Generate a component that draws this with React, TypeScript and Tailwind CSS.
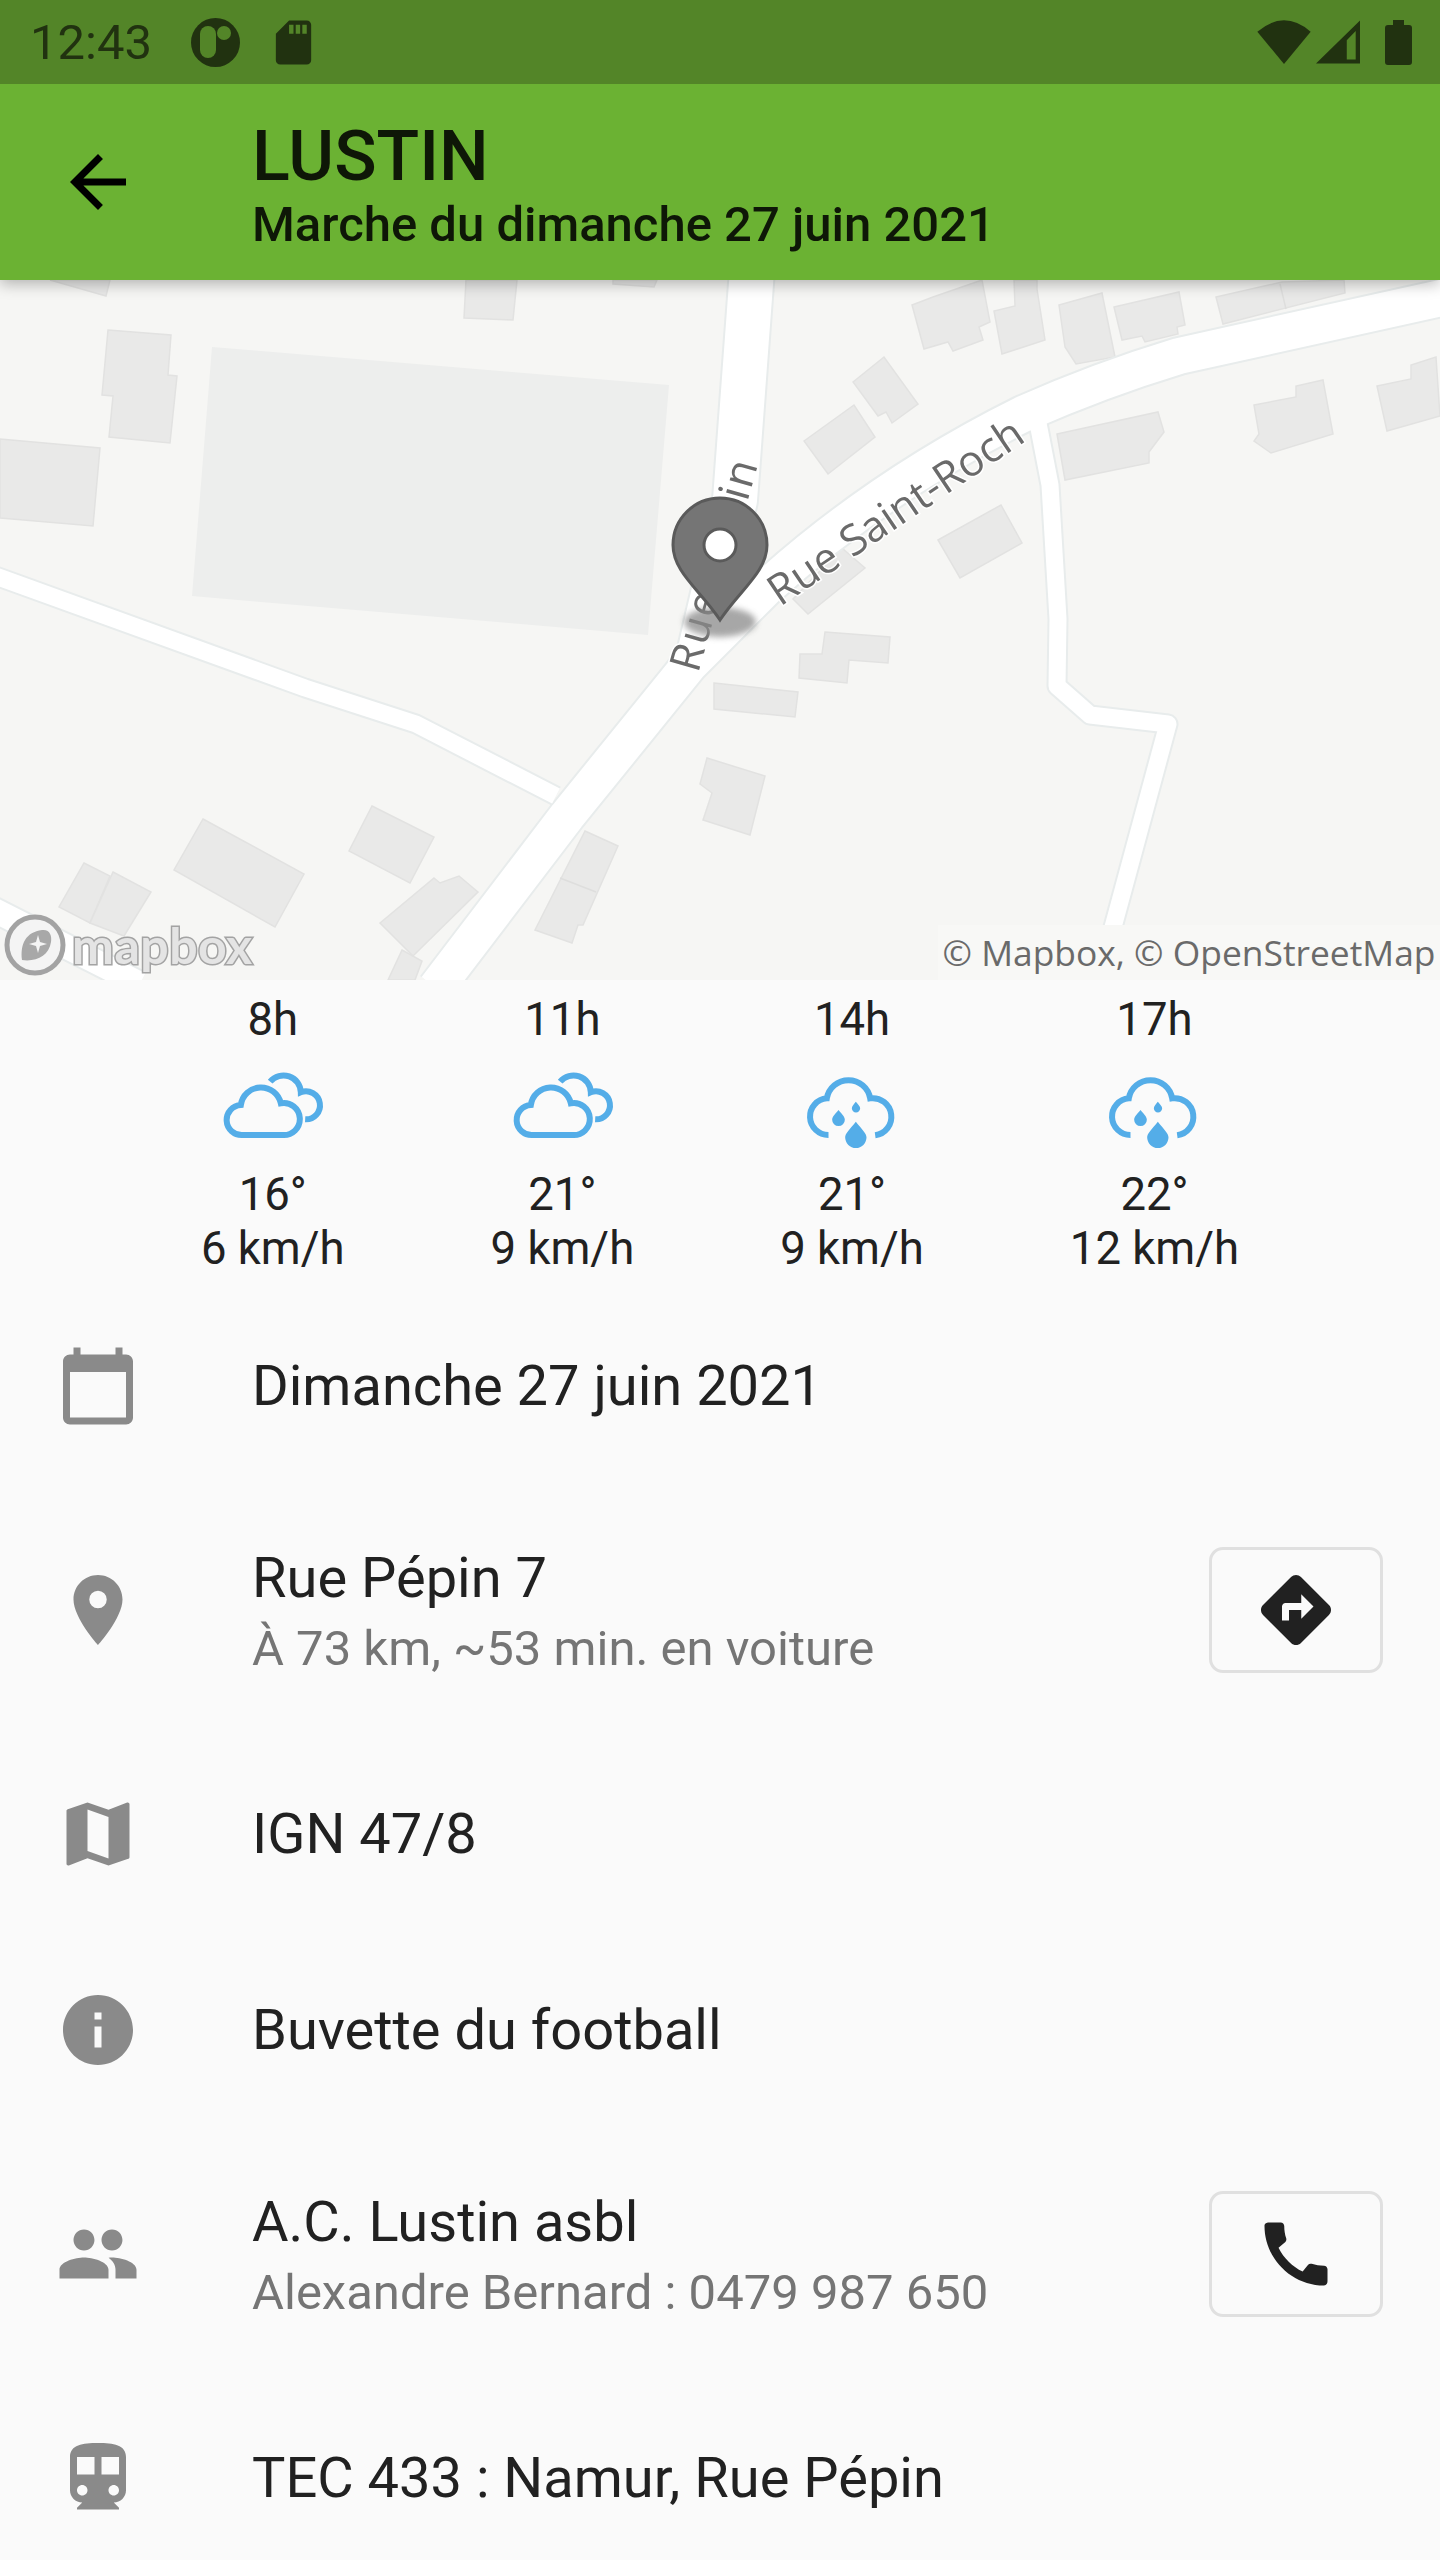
import React from "react";
import {
  MdArrowBack,
  MdCalendarToday,
  MdLocationOn,
  MdMap,
  MdInfo,
  MdPeople,
  MdDirectionsTransit,
  MdDirections,
  MdCall,
  MdSdCard,
} from "react-icons/md";

const buildings = [
  "50,0 110,0 106,16",
  "108,50 171,55 168,95 177,96 170,163 109,157 113,116 102,115",
  "0,159 100,168 93,246 0,238",
  "466,0 517,0 513,40 464,38",
  "613,0 657,0 654,7 613,4",
  "372,526 434,557 410,603 349,571",
  "203,539 304,594 275,647 174,590",
  "84,583 110,596 90,643 59,627",
  "113,592 151,612 124,656 90,643",
  "434,598 440,603 459,596 478,612 413,676 380,643",
  "585,551 618,566 583,645 578,645 572,663 535,650",
  "402,670 422,681 415,700 388,700",
  "707,478 765,496 750,555 703,540 712,513 700,504",
  "912,25 933,17 982,0 990,42 979,47 983,60 953,71 948,62 924,69",
  "1014,0 1037,0 1037,9 1045,60 1002,74 994,31 1015,26",
  "1059,25 1102,13 1115,77 1076,84 1065,67",
  "1114,27 1179,12 1185,45 1177,47 1178,54 1145,62 1142,56 1122,60",
  "1216,17 1282,2 1344,0 1345,13 1223,44",
  "853,102 884,77 918,124 892,143 886,132 878,136",
  "804,161 854,125 875,157 828,194",
  "1057,154 1158,132 1164,152 1149,172 1149,183 1065,200",
  "1254,125 1296,117 1296,106 1323,100 1333,154 1271,173 1254,161 1259,154",
  "1377,106 1411,99 1411,85 1436,77 1440,136 1387,151",
  "938,260 1001,225 1022,263 960,298",
  "842,268 865,288 808,334 793,319",
  "825,352 890,357 888,383 849,380 847,403 799,398 800,374 822,374",
  "714,403 798,412 795,437 714,429",
];

const roads = [
  { d: "M-10,294 L305,408 L416,444 L556,516", w: 17 },
  { d: "M-10,628 L140,704", w: 24 },
  { d: "M1037,138 L1050,205 L1058,339 L1057,406 L1090,435 L1168,444 L1096,710", w: 17 },
  { d: "M752,-10 L735,220 L700,370", w: 44 },
  { d: "M436,708 L567,536 L690,384 L766,308 Q880,205 1023,134 Q1100,100 1179,76 L1450,16", w: 36 },
];

const Map = () => (
  <div className="relative h-[700px] w-full overflow-hidden bg-[#f6f6f4]">
    <svg viewBox="0 0 1440 700" className="h-[700px] w-[1440px] blur-[0.5px]">
      <polygon points="212,67 669,105 648,355 192,316" fill="#edeeed" />
      {buildings.map((points) => (
        <polygon key={points} points={points} fill="#e9e9e8" stroke="#e2e2e1" strokeWidth="1.5" />
      ))}
      <path d="M560,598 L596,612 M1280,4 L1286,29" stroke="#dededd" strokeWidth="1.5" />
      {roads.map((road) => (
        <path key={road.d} d={road.d} fill="none" stroke="#e8ecec" strokeWidth={road.w + 4} strokeLinejoin="round" />
      ))}
      {roads.map((road) => (
        <path key={road.d + "top"} d={road.d} fill="none" stroke="#ffffff" strokeWidth={road.w} strokeLinejoin="round" />
      ))}
      <text
        transform="translate(780,327) rotate(-34)"
        fontFamily="'Open Sans', sans-serif"
        fontSize="42.5"
        fill="#6a6a6a"
        stroke="#ffffff"
        strokeWidth="3"
        paintOrder="stroke"
      >
        Rue Saint-Roch
      </text>
      <text
        transform="translate(698,394) rotate(-74)"
        fontFamily="'Open Sans', sans-serif"
        fontSize="43"
        letterSpacing="2"
        fill="#6a6a6a"
        stroke="#ffffff"
        strokeWidth="3"
        paintOrder="stroke"
      >
        Rue Pépin
      </text>
      <ellipse cx="720" cy="342" rx="36" ry="15" fill="#8a8a8a" opacity="0.75" className="blur-[3px]" />
      <path
        d="M720,340 C700,310 673,292 673,265 A47,47 0 1 1 767,265 C767,292 740,310 720,340 Z"
        fill="#757575"
        stroke="#5a5a5a"
        strokeWidth="3"
      />
      <circle cx="720" cy="265" r="16" fill="#ffffff" stroke="#5a5a5a" strokeWidth="3" />
    </svg>

    <div className="absolute bottom-0 right-0 flex h-[55px] w-[502px] items-center justify-center bg-[#f8f8f6] font-['Open_Sans',sans-serif] text-[35.4px] text-[#6a6a6a]">
      © Mapbox, © OpenStreetMap
    </div>

    <div className="absolute bottom-[4px] left-[4px] flex items-center gap-[6px]">
      <svg width="62" height="62" viewBox="0 0 62 62">
        <circle cx="31" cy="31" r="28" fill="#f4f4f4" stroke="#a3a3a3" strokeWidth="5" />
        <path d="M18,46 C16,30 22,18 38,16 C46,15 48,22 47,28 C45,42 32,48 18,46 Z" fill="#a8a8a8" />
        <path d="M34,21 L36,28 L43,30 L36,32 L34,39 L32,32 L25,30 L32,28 Z" fill="#f4f4f4" />
      </svg>
      <span className="font-['Lato',sans-serif] text-[50px] font-bold leading-none tracking-[0.5px] text-[#e4e4e4] [-webkit-text-stroke:3px_#a3a3a3] [paint-order:stroke_fill]">
        mapbox
      </span>
    </div>
  </div>
);

const CloudIcon = () => (
  <svg viewBox="60 30 320 252" className="h-[84px] w-[107px]" fill="none" stroke="#54ade8" strokeWidth="18">
    <path d="M130,225 H250 A48,48 0 1 0 245,130 A61,61 0 0 0 125,135 A45,45 0 0 0 130,225 Z" />
    <path d="M213,65 A52,52 0 0 1 305,97 A42,42 0 1 1 318,178" />
  </svg>
);

const RainIcon = () => (
  <svg viewBox="60 30 320 252" className="h-[84px] w-[107px]" fill="none">
    <path
      d="M148,225 A55.1,55.1 0 0 1 143,115 A66,66 0 0 1 273,115 A56,56 0 1 1 288,226"
      stroke="#54ade8"
      strokeWidth="18"
    />
    <path d="M230,185 C212,208 198,220 198,232 A32,32 0 0 0 262,232 C262,220 248,208 230,185 Z" fill="#54ade8" />
    <path d="M178,150 C168,162 159,170 159,179 A19,19 0 0 0 197,179 C197,170 188,162 178,150 Z" fill="#54ade8" />
    <path d="M230,125 C224,133 218,138 218,145 A12.5,12.5 0 0 0 243,145 C243,138 236,133 230,125 Z" fill="#54ade8" />
  </svg>
);

const forecast = [
  { hour: "8h", temp: "16°", wind: "6 km/h", rain: false },
  { hour: "11h", temp: "21°", wind: "9 km/h", rain: false },
  { hour: "14h", temp: "21°", wind: "9 km/h", rain: true },
  { hour: "17h", temp: "22°", wind: "12 km/h", rain: true },
];

const Row = ({
  icon,
  title,
  subtitle,
  action,
}: {
  icon: React.ReactNode;
  title: string;
  subtitle?: string;
  action?: React.ReactNode;
}) => (
  <div className={`flex items-center pl-[56px] pr-[57px] ${subtitle ? "h-[252px]" : "h-[196px]"}`}>
    <div className="w-[196px] shrink-0 text-[#8a8a8a]">{icon}</div>
    <div className={`flex-1 ${subtitle ? "pt-[3px]" : ""}`}>
      <div className="text-[56px] leading-[66px] text-[#212121]">{title}</div>
      {subtitle && <div className="mt-[9px] text-[49px] leading-[58px] text-[#757575]">{subtitle}</div>}
    </div>
    {action && (
      <button className="flex h-[126px] w-[174px] items-center justify-center rounded-[14px] border-[3.5px] border-[#e0e0e0] text-[#212121]">
        {action}
      </button>
    )}
  </div>
);

const App: React.FC = () => {
  return (
    <div className="h-[2560px] w-[1440px] overflow-hidden bg-[#fafafa] font-['Roboto',sans-serif]">
      <div className="relative z-10 shadow-[0_4px_14px_rgba(0,0,0,0.28)]">
        <div className="flex h-[84px] items-center bg-[#538528] text-[#213210]">
          <span className="ml-[30px] w-[161px] text-[49px] leading-none">12:43</span>
          <svg width="49" height="49" viewBox="0 0 49 49">
            <circle cx="24.5" cy="24.5" r="24.5" fill="#213210" />
            <rect x="9" y="8" width="16" height="32" rx="8" fill="#538528" />
            <circle cx="33" cy="15" r="7" fill="#538528" />
          </svg>
          <MdSdCard size={53} className="ml-[27px]" />
          <div className="ml-auto mr-[28px] flex items-center">
            <svg width="54" height="44" viewBox="473 58 160 132">
              <path d="M473,93 Q553,25 633,93 L553,190 Z" fill="#213210" />
            </svg>
            <svg width="44" height="44" viewBox="647 60 133 130" className="ml-[5px]">
              <path
                d="M647,190 L780,60 V190 Z M740,178 H767 V92 L740,120 Z"
                fill="#213210"
                fillRule="evenodd"
              />
            </svg>
            <svg width="27" height="45" viewBox="0 0 27 45" className="ml-[25px]">
              <path d="M8,0 H19 V5 H24 A3,3 0 0 1 27,8 V42 A3,3 0 0 1 24,45 H3 A3,3 0 0 1 0,42 V8 A3,3 0 0 1 3,5 H8 Z" fill="#213210" />
            </svg>
          </div>
        </div>

        <div className="flex h-[196px] items-center bg-[#6bb233] text-[#0e1707]">
          <div className="w-[252px] pl-[56px] text-black">
            <MdArrowBack size={84} />
          </div>
          <div className="pt-[6px]">
            <div className="text-[70px] font-medium leading-[80px]">LUSTIN</div>
            <div className="text-[49px] font-medium leading-[58px]">Marche du dimanche 27 juin 2021</div>
          </div>
        </div>
      </div>

      <Map />

      <div className="flex h-[308px] justify-center gap-[146px] pt-[13px] text-[45.5px] leading-[54px] text-[#212121]">
        {forecast.map((item) => (
          <div key={item.hour} className="flex flex-col items-center">
            <div>{item.hour}</div>
            <div className="mt-[23px]">{item.rain ? <RainIcon /> : <CloudIcon />}</div>
            <div className="mt-[14px]">{item.temp}</div>
            <div>{item.wind}</div>
          </div>
        ))}
      </div>

      <Row icon={<MdCalendarToday size={84} />} title="Dimanche 27 juin 2021" />
      <Row
        icon={<MdLocationOn size={84} />}
        title="Rue Pépin 7"
        subtitle="À 73 km, ~53 min. en voiture"
        action={<MdDirections size={84} />}
      />
      <Row icon={<MdMap size={84} />} title="IGN 47/8" />
      <Row icon={<MdInfo size={84} />} title="Buvette du football" />
      <Row
        icon={<MdPeople size={84} />}
        title="A.C. Lustin asbl"
        subtitle="Alexandre Bernard : 0479 987 650"
        action={<MdCall size={84} />}
      />
      <Row icon={<MdDirectionsTransit size={84} />} title="TEC 433 : Namur, Rue Pépin" />
    </div>
  );
};

export default App;
